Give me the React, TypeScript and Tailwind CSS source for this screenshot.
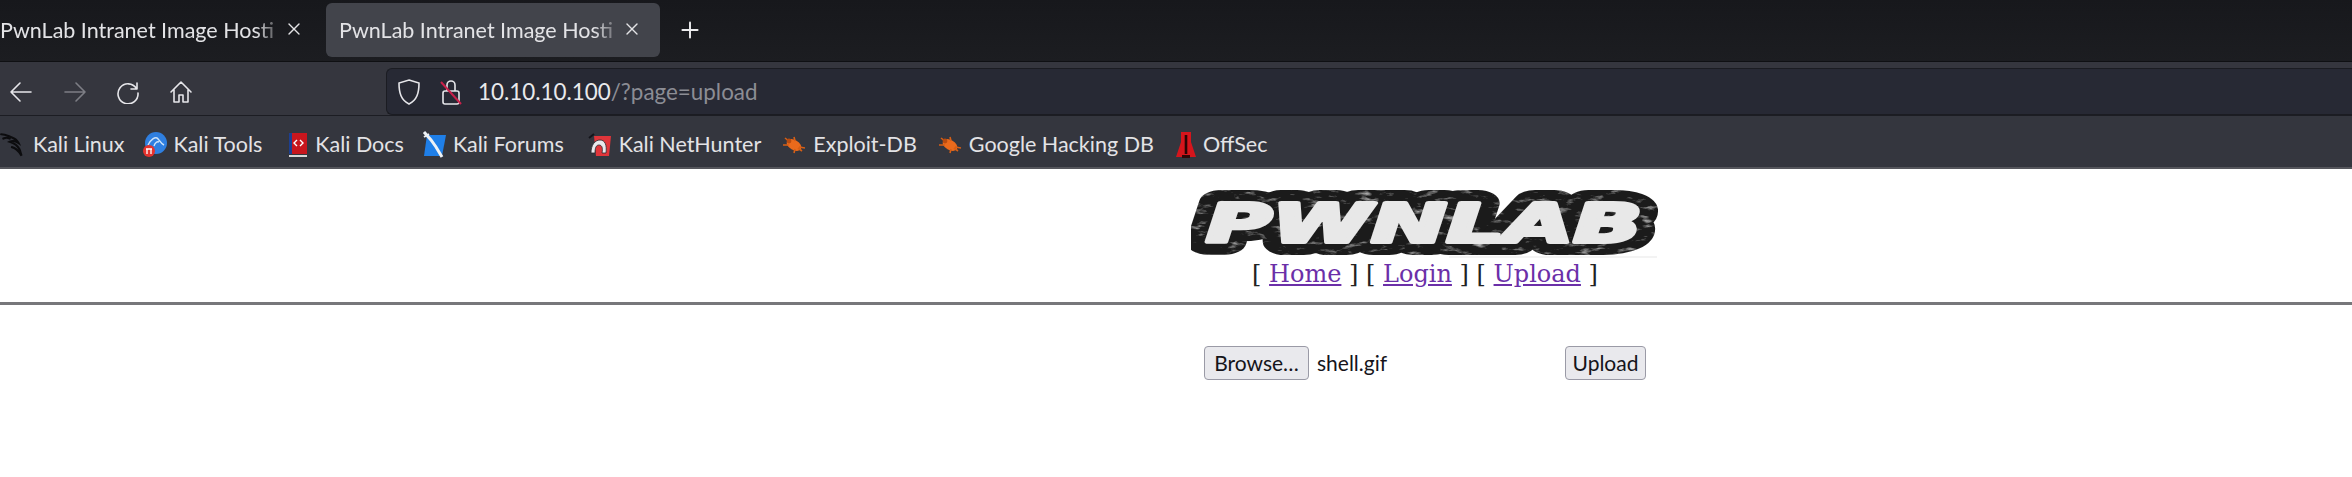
import React from 'react';
import { Plus, X } from 'lucide-react';

const DragonIcon = () => (
  <svg width="26" height="28" viewBox="0 0 24 26" fill="none" stroke="#0c0c0e" strokeWidth="2" strokeLinecap="round">
    <path d="M1 3c4 0 7 2 10 3 3 1 5 3 6 5-3-2-6-2-8-1 3 1 7 3 9 7 1 2 1 4 2 6-2-3-4-7-9-8" />
    <path d="M3 7c2-1 4-1 6 0" />
  </svg>
);

const ToolsIcon = () => (
  <svg width="24" height="26" viewBox="0 0 24 26">
    <circle cx="13" cy="11" r="11" fill="#2f7fe0" />
    <path d="M5 13c3-6 7-8 9-7 2 1 3 5 7 7M11 14c1-3 3-5 5-4" stroke="#cfe4fa" strokeWidth="1.4" fill="none" />
    <circle cx="6" cy="19" r="6" fill="#e5322d" />
    <path d="M4 17v5M8 17v5M3 17h6" stroke="#fff" strokeWidth="1.3" />
  </svg>
);

const DocsIcon = () => (
  <svg width="20" height="26" viewBox="0 0 20 26">
    <rect x="1" y="1" width="18" height="21" fill="#c8161d" />
    <rect x="1" y="1" width="3" height="21" fill="#1d3f8f" />
    <path d="M9 8l-3 3 3 3M12 8l3 3-3 3" stroke="#fff" strokeWidth="1.4" fill="none" />
    <rect x="1" y="23" width="18" height="2" fill="#d8d8d8" />
  </svg>
);

const ForumsIcon = () => (
  <svg width="24" height="28" viewBox="0 0 24 28">
    <path d="M5 4h19l-4 21H2z" fill="#1f7fe8" />
    <path d="M2 1l7 8 5 7 6 10" stroke="#eef2f6" strokeWidth="3" fill="none" />
    <path d="M2 6l5-3" stroke="#eef2f6" strokeWidth="2" />
  </svg>
);

const NetHunterIcon = () => (
  <svg width="24" height="26" viewBox="0 0 24 26">
    <path d="M6 4h17l-2 20H8z" fill="#e0353a" />
    <path d="M3 21c0-8 4-13 9-13s7 5 6 13h-4c1-5 0-8-3-8s-4 3-4 8z" fill="#e9e9ec" stroke="#2a2a2e" strokeWidth="0.8" />
    <path d="M1 6l5-4" stroke="#14141a" strokeWidth="2" />
  </svg>
);

const BugIcon = () => (
  <svg width="24" height="20" viewBox="0 0 24 20">
    <ellipse cx="12" cy="10" rx="8" ry="5" transform="rotate(30 12 10)" fill="#ea6a1c" />
    <path d="M3 3l5 4M1 10h6M12 2l1 4M20 16l-4-3M12 18l1-4M23 13l-6-1" stroke="#d65f16" strokeWidth="1.6" />
    <circle cx="7" cy="6" r="2.4" fill="#b94c10" />
  </svg>
);

const OffSecIcon = () => (
  <svg width="20" height="28" viewBox="0 0 20 28">
    <path d="M5 1h10v10l5 15H0L5 11z" fill="#d5151c" />
    <path d="M10 4v19" stroke="#2a0505" strokeWidth="2.6" />
    <rect x="6" y="24" width="8" height="3" fill="#320808" />
  </svg>
);

const bookmarks = [
  { name: 'Kali Linux', icon: <DragonIcon />, box: 'w-[26px]', gap: 'mr-[18px]' },
  { name: 'Kali Tools', icon: <ToolsIcon />, box: 'w-[24px]', gap: 'mr-[26px]' },
  { name: 'Kali Docs', icon: <DocsIcon />, box: 'w-[20px]', gap: 'mr-[18px]' },
  { name: 'Kali Forums', icon: <ForumsIcon />, box: 'w-[24px]', gap: 'mr-[24px]' },
  { name: 'Kali NetHunter', icon: <NetHunterIcon />, box: 'w-[24px]', gap: 'mr-[21px]' },
  { name: 'Exploit-DB', icon: <BugIcon />, box: 'w-[24px]', gap: 'mr-[21px]' },
  { name: 'Google Hacking DB', icon: <BugIcon />, box: 'w-[24px]', gap: 'mr-[22px]' },
  { name: 'OffSec', icon: <OffSecIcon />, box: 'w-[20px]', gap: '' },
];

// the tab title is cut where the browser fades it out
const tabLabel = 'PwnLab Intranet Image Hosti';

const Tab: React.FC<{ active?: boolean }> = ({ active }) => (
  <div className={active ? 'flex h-[54px] w-[334px] items-center rounded-[6px] bg-[#42444b] pl-[13px] pr-[18px]' : 'flex h-[54px] w-[326px] items-center pr-[22px]'}>
    <span className="flex-1 whitespace-nowrap text-[21.5px] text-[#e3e3e6] [mask-image:linear-gradient(to_right,black_90%,transparent)]">
      {tabLabel}
    </span>
    <X size={20} strokeWidth={1.6} className="-mt-[3px] shrink-0 text-[#e3e3e6]" />
  </div>
);

const NavIcon: React.FC<{ d: string; className?: string }> = ({ d, className }) => (
  <svg width="24" height="24" viewBox="0 0 24 24" fill="none" stroke="currentColor" strokeWidth="1.6" strokeLinecap="round" strokeLinejoin="round" className={className}>
    <path d={d} />
  </svg>
);

const logoText = {
  x: 233,
  y: 55,
  textAnchor: 'middle' as const,
  textLength: 436,
  lengthAdjust: 'spacingAndGlyphs' as const,
  fontFamily: "'DejaVu Sans', sans-serif",
  fontWeight: 700,
  fontStyle: 'italic',
  fontSize: 54,
  strokeLinejoin: 'round' as const,
};

const PwnlabLogo = () => (
  <svg width="468" height="72" viewBox="0 0 468 72" className="block">
    <defs>
      <filter id="grain" filterUnits="userSpaceOnUse" x="0" y="0" width="468" height="72" colorInterpolationFilters="sRGB">
        <feTurbulence type="fractalNoise" baseFrequency="0.06 0.18" numOctaves="4" seed="7" />
        <feColorMatrix values="0 0 0 0 0.75  0 0 0 0 0.75  0 0 0 0 0.75  3 0 0 0 -1.72" />
        <feComposite in2="SourceAlpha" operator="in" />
        <feMerge>
          <feMergeNode in="SourceGraphic" />
          <feMergeNode />
        </feMerge>
      </filter>
    </defs>
    <g filter="url(#grain)">
      <text {...logoText} fill="#1b1b1b" stroke="#1b1b1b" strokeWidth="26">
        PWNLAB
      </text>
    </g>
    <text {...logoText} fill="#e8e8e8" stroke="#e8e8e8" strokeWidth="4">
      PWNLAB
    </text>
    <path d="M258 70h208" stroke="#efefef" strokeWidth="1.5" />
  </svg>
);

export default function App() {
  return (
    <div className="h-[477px] w-[2352px] overflow-hidden bg-white font-['Lato',sans-serif]">
      {/* Tab strip */}
      <div className="flex h-[62px] items-start border-b border-[#0f1013] bg-gradient-to-b from-[#17181c] to-[#1c1d21] pt-[3px]">
        <Tab />
        <Tab active />
        <Plus size={26} strokeWidth={1.8} className="ml-[17px] mt-[14px] text-[#ececee]" />
      </div>

      {/* Nav bar */}
      <div className="flex h-[54px] border-b border-[#1c1d23] bg-[#35363e]">
        <div className="flex w-[386px] shrink-0 items-center pl-[9px] pt-[6px] text-[#e6e6ea]">
          <NavIcon d="M2 12h20M11 3l-9 9 9 9" />
          <NavIcon d="M2 12h20M13 3l9 9-9 9" className="ml-[30px] text-[#7d7e85]" />
          <NavIcon d="M21 3v6h-6M20.5 8.5A10 10 0 1 0 22 13" className="ml-[29px]" />
          <NavIcon d="M2 12L12 2l10 10M5 10v12h5v-7h4v7h5V10" className="ml-[29px]" />
        </div>
        <div className="mt-[6px] flex h-[47px] flex-1 items-center rounded-l-[6px] border border-r-0 border-[#1b1c22] bg-[#272934]">
          <svg width="24" height="28" viewBox="0 0 24 28" fill="none" stroke="#e6e6ea" strokeWidth="1.6" className="ml-[10px]">
            <path d="M12 2l10 3c0 10-2 17-10 21C4 22 2 15 2 5z" />
          </svg>
          <svg width="24" height="28" viewBox="0 0 24 28" fill="none" className="ml-[18px] text-[#e6e6ea]">
            <rect x="4" y="13" width="16" height="13" rx="2" stroke="currentColor" strokeWidth="1.6" />
            <path d="M8 13V7a4 4 0 0 1 8 0v6" stroke="currentColor" strokeWidth="1.6" />
            <path d="M2 4l20 22" stroke="#c9204a" strokeWidth="2" />
          </svg>
          <span className="ml-[15px] text-[22.4px] text-[#e9e9ec]">
            10.10.10.100<span className="text-[#8c8d94]">/?page=upload</span>
          </span>
        </div>
      </div>

      {/* Bookmarks */}
      <div className="flex h-[53px] items-center border-b-2 border-[#55565c] bg-[#34363e] pt-[7px]">
        {bookmarks.map((b) => (
          <div key={b.name} className={`flex items-center ${b.gap}`}>
            <span className={`flex justify-center ${b.box}`}>{b.icon}</span>
            <span className="ml-[7px] -mt-[2px] whitespace-nowrap text-[21.5px] text-[#e3e3e6]">{b.name}</span>
          </div>
        ))}
      </div>

      {/* Page */}
      <div className="pt-[18px] font-['DejaVu_Serif',serif] text-[24px] text-[#222]">
        <div className="flex flex-col items-center pl-[498px]">
          <PwnlabLogo />
          <div className="mt-[1px] whitespace-pre leading-[28px]">
            {'[ '}
            <a className="text-[#6b2fa8] underline">Home</a>
            {' ] [ '}
            <a className="text-[#6b2fa8] underline">Login</a>
            {' ] [ '}
            <a className="text-[#6b2fa8] underline">Upload</a>
            {' ]'}
          </div>
        </div>
        <hr className="mt-[14px] h-[3px] border-0 bg-[#77777a]" />
        <div className="mt-[41px] flex justify-center pl-[498px] font-['Lato',sans-serif] text-[21px] text-[#15141a]">
          <div className="flex w-[442px] items-center">
            <button className="h-[34px] w-[105px] rounded-[4px] border border-[#9a9aa6] bg-[#e9e9ed]">Browse…</button>
            <span className="ml-[8px] flex-1">shell.gif</span>
            <button className="h-[34px] w-[81px] rounded-[4px] border border-[#9a9aa6] bg-[#e9e9ed]">Upload</button>
          </div>
        </div>
      </div>
    </div>
  );
}
